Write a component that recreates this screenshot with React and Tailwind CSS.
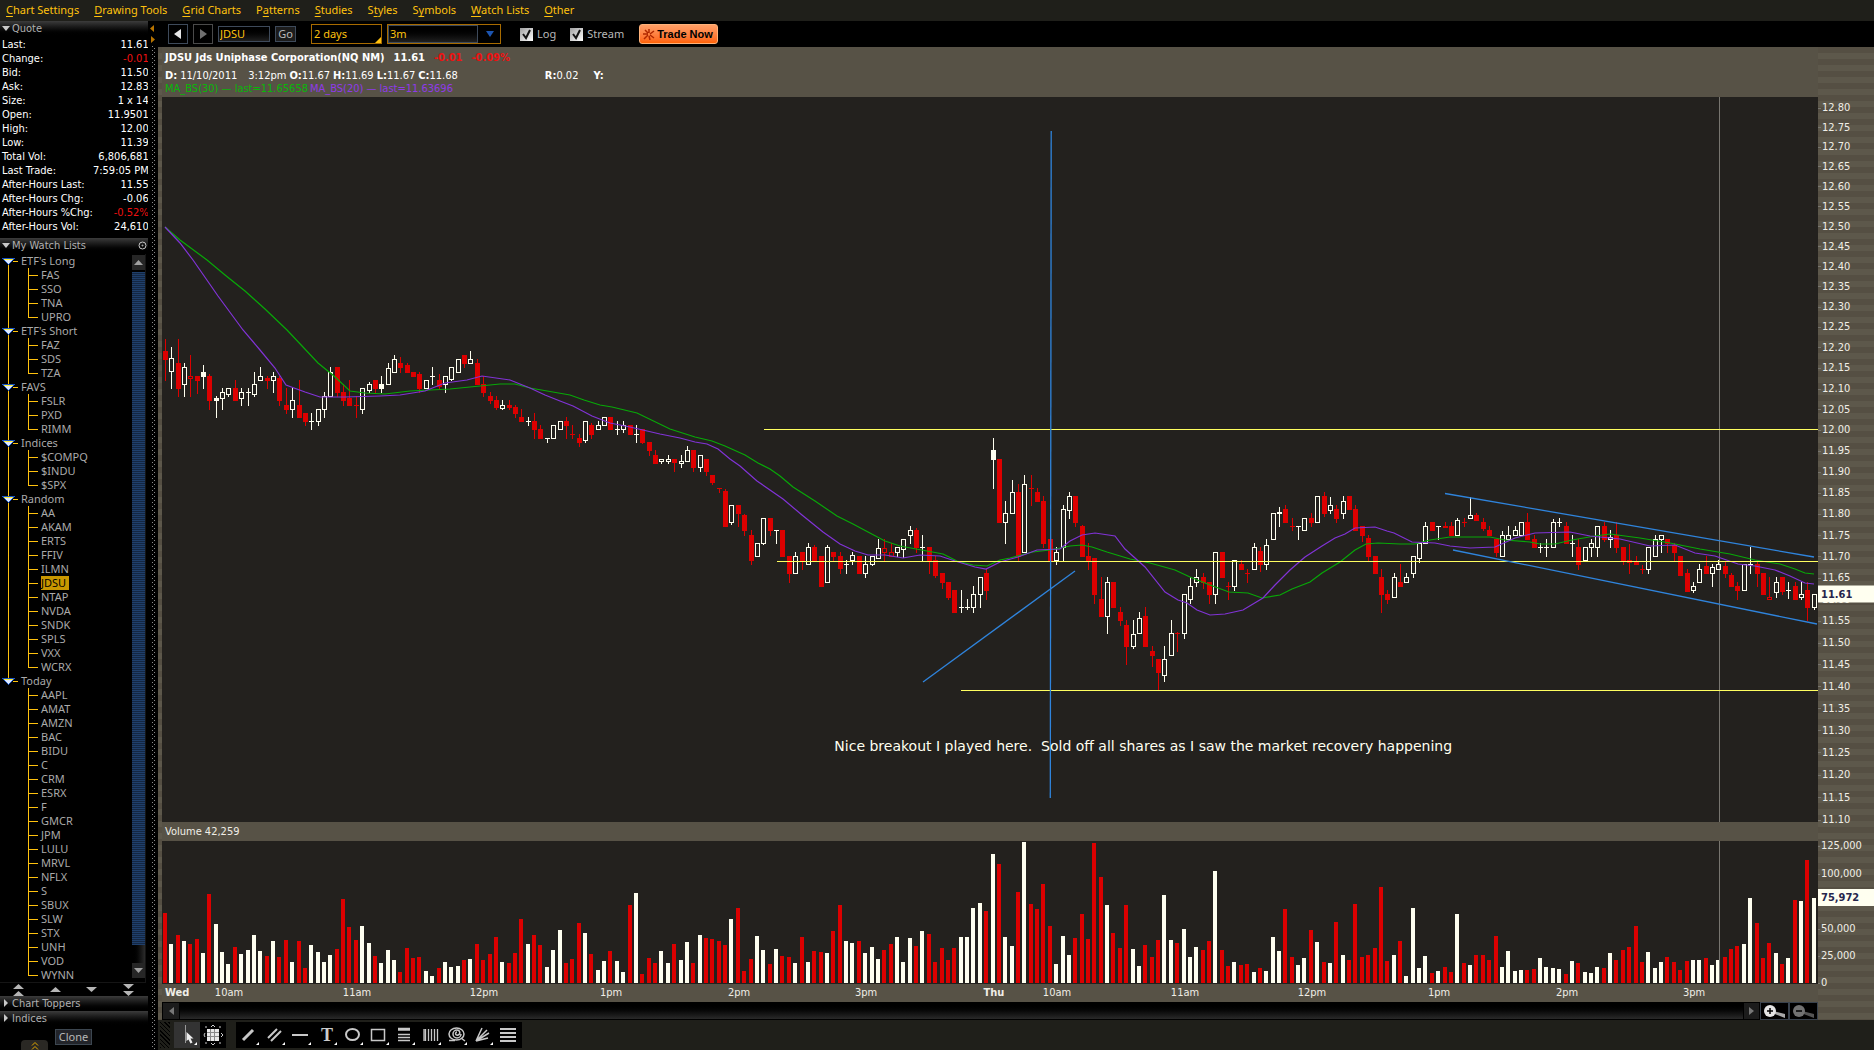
import React, { useState } from "react";

const MENUS = [
  ["", "C", "hart Settings"],
  ["", "D", "rawing Tools"],
  ["", "G", "rid Charts"],
  ["P", "a", "tterns"],
  ["", "S", "tudies"],
  ["S", "t", "yles"],
  ["S", "y", "mbols"],
  ["", "W", "atch Lists"],
  ["", "O", "ther"],
];

const QUOTE = [
  ["Last:", "11.61"],
  ["Change:", "-0.01", true],
  ["Bid:", "11.50"],
  ["Ask:", "12.83"],
  ["Size:", "1 x 14"],
  ["Open:", "11.9501"],
  ["High:", "12.00"],
  ["Low:", "11.39"],
  ["Total Vol:", "6,806,681"],
  ["Last Trade:", "7:59:05 PM"],
  ["After-Hours Last:", "11.55"],
  ["After-Hours Chg:", "-0.06"],
  ["After-Hours %Chg:", "-0.52%", true],
  ["After-Hours Vol:", "24,610"],
];

const WATCH_LISTS = [
  { name: "ETF's Long", symbols: ["FAS", "SSO", "TNA", "UPRO"] },
  { name: "ETF's Short", symbols: ["FAZ", "SDS", "TZA"] },
  { name: "FAVS", symbols: ["FSLR", "PXD", "RIMM"] },
  { name: "Indices", symbols: ["$COMPQ", "$INDU", "$SPX"] },
  {
    name: "Random",
    symbols: ["AA", "AKAM", "ERTS", "FFIV", "ILMN", "JDSU", "NTAP", "NVDA", "SNDK", "SPLS", "VXX", "WCRX"],
  },
  {
    name: "Today",
    symbols: [
      "AAPL", "AMAT", "AMZN", "BAC", "BIDU", "C", "CRM", "ESRX", "F", "GMCR", "JPM",
      "LULU", "MRVL", "NFLX", "S", "SBUX", "SLW", "STX", "UNH", "VOD", "WYNN",
    ],
  },
];

// one candle per 3 minutes: kind high top bottom low
// r = down, w = up, R = down hollow, W = up filled
const CANDLES = `r 339 351 360 381,w 347 358 372 389,r 339 363 389 397,w 363 367 385 397,R 355 376 379 397,r 376 376 381 394,W 365 372 377 389,r 374 376 401 410,W 396 398 401 418,w 388 392 399 410,
w 388 388 395 397,r 380 388 401 401,w 388 392 399 406,w 388 392 393 406,w 372 384 395 397,w 367 376 381 381,r 376 378 381 389,w 372 376 381 393,r 376 378 401 406,r 388 405 410 414,
w 388 400 410 418,r 380 405 418 418,r 413 413 422 426,w 413 421 422 430,w 409 409 422 426,w 392 396 410 418,w 367 372 397 397,r 367 367 393 397,r 384 392 401 406,r 380 398 406 406,
r 396 405 406 418,w 388 388 410 414,w 382 384 391 393,r 380 380 389 393,W 376 384 389 393,w 363 368 385 385,w 355 359 373 373,r 357 363 368 373,r 363 365 373 373,r 372 372 377 377,
r 372 374 389 393,w 380 380 389 389,w 367 376 377 385,r 374 380 387 389,w 376 376 385 393,w 367 367 380 381,w 359 359 373 373,r 355 355 364 368,w 351 359 364 364,r 359 363 385 385,
r 376 384 393 397,r 392 396 401 404,r 396 400 408 410,w 400 405 409 410,r 400 405 408 410,r 405 407 414 418,r 409 417 422 422,w 417 421 422 426,r 413 421 430 439,r 425 429 439 439,
w 438 438 439 443,w 425 425 439 439,w 421 421 430 430,r 417 421 426 439,r 425 434 435 439,r 434 438 443 447,w 421 421 441 443,r 423 425 435 439,w 421 425 430 430,w 417 417 426 426,
r 417 417 430 430,w 421 429 430 435,w 421 425 430 433,r 425 425 435 435,w 425 434 435 443,r 429 429 443 444,r 442 442 451 456,r 450 455 464 464,w 459 459 462 464,w 455 459 462 464,
r 459 459 463 472,w 455 461 464 468,w 446 450 462 462,r 450 450 468 472,w 455 455 468 472,r 459 459 472 476,r 475 475 483 485,r 488 488 489 493,r 489 491 527 527,w 505 505 523 525,
r 505 505 514 527,r 514 515 531 536,r 530 535 561 565,w 543 543 557 557,w 518 518 544 545,r 518 518 531 536,w 530 530 531 544,r 530 530 557 557,r 556 556 574 583,w 552 556 574 574,
r 552 552 561 570,w 543 547 565 565,r 545 547 561 561,r 556 556 587 587,w 545 547 583 583,r 552 552 557 561,r 552 556 569 574,w 560 564 565 574,w 552 555 561 565,r 556 556 574 574,
w 556 564 574 578,w 556 556 565 566,w 539 548 559 559,R 539 548 553 561,R 543 552 557 557,w 547 547 553 557,w 539 539 550 558,w 526 530 536 544,r 528 530 548 553,w 535 547 548 561,
r 547 547 562 574,r 556 560 576 578,r 573 573 583 589,r 582 582 598 600,r 590 590 613 613,w 590 607 608 613,w 599 607 608 610,w 586 594 608 613,w 577 577 595 608,r 569 573 591 600,
W 438 450 460 489,r 459 459 523 523,w 501 513 523 544,w 480 492 514 514,r 484 492 557 561,w 475 484 553 553,r 475 488 489 506,r 488 492 502 502,r 496 501 544 548,r 539 539 561 561,
w 547 552 561 565,w 505 509 548 561,w 492 496 511 519,r 496 496 523 527,r 525 526 557 557,r 543 556 561 570,r 558 558 595 604,r 577 599 617 617,w 577 582 617 634,r 582 582 608 608,
r 607 612 621 626,r 620 625 647 665,w 620 634 647 649,w 612 618 634 634,r 607 616 647 647,r 646 651 656 667,r 659 659 673 690,w 646 659 676 682,w 620 633 656 656,r 632 633 634 652,
w 594 594 634 639,w 577 586 600 604,w 569 577 583 587,r 573 577 583 589,r 582 582 595 604,w 552 552 595 604,r 552 552 578 578,r 582 586 587 600,w 560 560 587 591,r 560 564 570 570,
r 569 573 574 583,w 543 547 570 570,r 547 551 565 572,w 539 545 565 570,w 513 513 540 540,W 507 512 514 527,r 505 509 523 523,r 518 526 527 531,w 526 526 527 540,w 518 518 531 531,
r 513 518 523 527,w 496 496 523 523,r 492 496 514 517,w 497 505 511 514,r 505 509 519 523,w 496 501 514 519,r 496 496 510 510,r 505 509 531 531,r 526 526 536 542,r 535 538 557 561,
r 556 556 574 574,r 569 577 595 613,r 590 594 600 604,w 573 577 598 598,r 564 582 587 587,w 573 577 583 583,w 556 556 574 578,w 543 543 559 563,w 522 526 544 544,r 522 522 531 531,
w 526 526 527 540,r 522 526 528 528,r 522 526 536 536,w 518 520 536 536,r 518 522 523 527,w 497 515 519 519,r 513 515 521 521,r 518 522 529 531,r 526 530 536 536,r 539 539 553 557,
w 531 535 557 557,w 526 535 540 540,w 526 530 536 536,w 522 522 536 536,r 513 522 540 540,r 535 539 548 548,w 543 547 548 553,w 539 547 548 557,w 519 522 548 548,w 518 522 523 527,
r 522 526 544 544,w 535 543 544 557,r 539 547 565 570,w 547 547 561 561,w 539 543 548 557,w 526 526 548 557,r 522 526 540 542,w 530 537 540 548,r 522 535 548 553,r 547 547 561 565,
r 544 560 563 574,r 556 561 565 565,r 565 569 570 574,w 547 547 570 574,w 535 539 557 557,w 535 535 540 553,r 539 539 544 553,r 543 545 553 561,r 556 556 576 576,r 569 573 592 592,
w 582 586 591 593,w 564 569 583 583,r 556 566 574 574,w 564 567 574 587,w 560 564 570 570,r 562 566 574 578,r 573 575 587 587,r 582 586 591 600,w 564 564 591 591,w 547 564 565 574,
r 560 564 574 587,r 573 573 595 595,R 577 597 600 600,w 577 582 593 598,r 577 577 592 595,w 582 590 591 599,r 582 586 600 600,w 582 594 598 600,r 582 590 608 621,w 594 594 608 610`
  .split(",")
  .map((row) => {
    const [kind, ...v] = row.trim().split(" ");
    return [kind, ...v.map(Number)];
  });

// bar heights, negative for a down bar
const VOLUME = [
  -70, 39, -48, 42, -39, -44, 30, -89, 59, 31, 19, -36, 29, 33, 48, 32, -27, 42, -26, -43,
  21, -42, -15, 38, 31, 21, 28, -34, -84, -56, -43, 57, 40, -27, 20, 33, 23, -11, -35, -25,
  -26, 12, 7, -15, 21, 16, 17, -23, 24, -39, -23, -29, -46, 21, -20, -30, -64, 39, -48, -38,
  16, 33, 53, -20, -24, -60, 50, -29, 13, 22, -32, 22, 11, -78, 90, -9, -25, -20, 32, 20,
  -39, 23, 41, -20, 48, -45, -44, -42, -38, 64, -75, -12, -24, 47, 33, -19, 34, -27, -26, 20,
  -46, 21, -32, -31, 30, -52, -78, 42, 40, -42, 30, 36, 24, -33, -39, 46, 21, 45, -37, 52,
  -49, -21, -35, -23, -35, 46, 46, 75, 80, -72, 129, -119, 46, 37, -91, 141, -79, -74, -99, -57,
  19, 47, 28, -45, -69, -44, -140, -106, 78, -50, -35, -78, 34, 17, -38, -26, -43, 88, 43, -40,
  54, 26, 36, -33, -42, 112, -33, -17, 21, -18, -19, 11, -15, 12, 46, 32, -74, -26, 18, 25,
  -53, 41, -21, 20, -61, 28, -23, -79, -26, -28, -35, -96, -22, 28, -42, 7, 75, 15, 27, -10,
  12, -16, -11, 69, -20, 18, -28, -28, -23, -47, 16, 32, 12, 13, -13, -14, 25, 16, 15, 14,
  -9, 22, -20, 11, 10, 16, -15, 30, -23, -33, -36, -57, -21, 31, 15, 21, -26, -21, -13, -22,
  23, 23, -25, 18, 23, -26, -34, -37, 39, 85, -60, -25, -40, 30, -19, 25, -83, 82, -123, 85,
];

const MA30 =
  "165,227 180,240 207,260 225,275 245,291 265,309 287,330 303,347 318,363 334,376 350,391 365,393 385,394 410,391 450,389 480,386 500,384 515,384 530,388 570,395 584,400 600,405 612,407 637,413 670,429 695,437 712,441 725,446 745,455 758,463 770,469 780,476 793,487 815,501 837,516 853,524 868,532 885,541 900,546 927,551 943,554 957,561 973,565 987,566 1000,560 1010,558 1033,552 1050,550 1070,546 1082,545 1092,547 1107,552 1130,559 1150,563 1175,570 1190,577 1210,585 1229,592 1248,593 1262,598 1280,595 1292,589 1310,582 1322,573 1340,562 1355,550 1366,544 1378,543 1400,544 1415,544 1430,540 1450,537 1490,537 1505,540 1530,542 1540,544 1555,544 1572,540 1595,536 1610,534 1640,538 1670,543 1700,549 1730,554 1755,560 1780,564 1795,569 1805,573 1814,574";
const MA20 =
  "165,227 180,243 193,260 218,296 243,330 260,350 275,368 286,385 305,392 320,397 345,397 380,396 400,395 425,391 445,383 467,380 482,376 510,380 530,388 545,395 560,401 573,406 592,416 610,423 630,427 660,434 680,438 695,442 707,444 718,449 730,459 740,466 757,481 783,499 802,515 823,532 840,544 855,551 868,555 885,555 903,558 920,555 940,556 955,561 975,567 986,569 1000,562 1018,557 1037,550 1060,549 1070,541 1082,535 1095,533 1115,536 1125,549 1145,567 1165,592 1178,600 1187,603 1197,610 1210,615 1225,614 1243,610 1263,598 1275,585 1290,570 1305,557 1322,546 1335,538 1345,534 1355,528 1375,527 1387,531 1394,533 1412,542 1435,543 1450,546 1470,548 1495,547 1515,538 1535,533 1570,532 1590,536 1620,539 1650,546 1675,545 1695,553 1715,556 1738,564 1755,566 1775,570 1790,576 1805,583 1814,584";

const TIMES = [
  [10, "10am"], [30, "11am"], [50, "12pm"], [70, "1pm"], [90, "2pm"], [110, "3pm"],
  [130, "Thu"], [140, "10am"], [160, "11am"], [180, "12pm"], [200, "1pm"], [220, "2pm"], [240, "3pm"],
];

const PRICES = Array.from({ length: 35 }, (_, i) => (12.8 - i * 0.05).toFixed(2));
const VOLUMES = [[125000, 5], [100000, 33], [50000, 88], [25000, 115], [0, 142]];

const RED = "#dc0000";
const WHITE = "#fffff0";

const barX = (i) => Math.floor(165.3 + i * 6.367);

// log scale, as a share of the plot's height
const priceTop = (p) => (11 + 4996.6 * Math.log(12.8 / p)) / 725;

function Candle({ i, data }) {
  const [kind, high, top, bottom, low] = data;
  const x = barX(i);
  const color = kind.toLowerCase() === "r" ? RED : WHITE;
  const hollow = kind === "w" || kind === "R";
  return (
    <g fill={color} shapeRendering="crispEdges">
      {top > high && <rect x={x} y={high} width="1" height={top - high} />}
      {low > bottom && <rect x={x} y={bottom} width="1" height={low - bottom} />}
      {hollow && bottom - top > 2 ? (
        <rect x={x - 1.5} y={top + 0.5} width="4" height={bottom - top - 1} fill="none" stroke={color} />
      ) : (
        <rect x={x - 2} y={top} width="5" height={bottom - top} />
      )}
    </g>
  );
}

function PricePlot() {
  return (
    <div className="relative min-h-0 flex-1 bg-[#23211e]">
      <svg className="block h-full w-full" viewBox="162 97 1656 725" preserveAspectRatio="none">
        <line x1="1719.5" x2="1719.5" y1="97" y2="822" stroke="#77756f" />
        {CANDLES.map((c, i) => (
          <Candle key={i} i={i} data={c} />
        ))}
        <polyline points={MA30} fill="none" stroke="#08a808" strokeWidth="1.2" />
        <polyline points={MA20} fill="none" stroke="#8133d6" strokeWidth="1.2" />
        <g fill="#ffff60" shapeRendering="crispEdges">
          <rect x="764" y="429" width="1054" height="1" />
          <rect x="777" y="561" width="1041" height="1" />
          <rect x="961" y="690" width="857" height="1" />
        </g>
        <g stroke="#2f84dc" strokeWidth="1.3">
          <line x1="1051.2" y1="131" x2="1050.3" y2="798" />
          <line x1="923" y1="682" x2="1075" y2="571" />
          <line x1="1445" y1="493.5" x2="1814" y2="557" />
          <line x1="1453" y1="550" x2="1817" y2="624" />
        </g>
      </svg>
      <p className="absolute top-[89.5%] left-[40.6%] -translate-y-1/2 font-[DejaVu_Sans,sans-serif] text-[14px] leading-4 whitespace-pre text-[#fffff0]">
        {"Nice breakout I played here.  Sold off all shares as I saw the market recovery happening"}
      </p>
    </div>
  );
}

function VolumePlot() {
  return (
    <svg className="block h-[143px] w-full bg-[#23211e]" viewBox="162 0 1656 143" preserveAspectRatio="none">
      <g shapeRendering="crispEdges">
        {VOLUME.map((v, i) => (
          <rect key={i} x={barX(i) - 2} y={142 - Math.abs(v)} width="4" height={Math.abs(v)} fill={v < 0 ? RED : WHITE} />
        ))}
        <rect x="1719" y="0" width="1" height="142" fill="#77756f" />
      </g>
    </svg>
  );
}

function TimeAxis() {
  return (
    <div className="relative h-[18px] text-[11px] leading-[18px]">
      <b className="absolute left-[3px]">Wed</b>
      {TIMES.map(([i, label]) => (
        <span
          key={i}
          className={label === "Thu" ? "absolute -translate-x-1/2 font-bold" : "absolute -translate-x-1/2"}
          style={{ left: `${((barX(i) - 161) / 1656) * 100}%` }}
        >
          {label}
        </span>
      ))}
    </div>
  );
}

function Scale() {
  return (
    <div className="flex w-[56px] shrink-0 flex-col bg-[repeating-linear-gradient(#554f43_0_6px,#5d584b_6px_12px)] text-[11px] leading-[14px]">
      <div className="h-[50px]" />
      <div className="relative flex-1">
        {PRICES.map((p) => (
          <span
            key={p}
            className="absolute left-0 flex -translate-y-1/2 items-center gap-px"
            style={{ top: `${priceTop(p) * 100}%` }}
          >
            <i className="h-px w-[3px] bg-[#77756f]" />
            {p}
          </span>
        ))}
        <b
          className="absolute left-0 h-[17px] w-full -translate-y-1/2 bg-[#fffff0] pl-[3px] leading-[17px] text-[#26264c]"
          style={{ top: `${(497 / 725) * 100}%` }}
        >
          11.61
        </b>
      </div>
      <div className="h-[19px]" />
      <div className="relative h-[143px]">
        {VOLUMES.map(([v, top]) => (
          <span key={v} className="absolute left-0 flex -translate-y-1/2 items-center gap-px" style={{ top }}>
            <i className="h-px w-[2px] bg-[#77756f]" />
            {v.toLocaleString("en-US")}
          </span>
        ))}
        <b className="absolute top-[48px] left-0 h-[17px] w-full bg-[#fffff0] pl-[3px] leading-[17px] text-[#26264c]">
          75,972
        </b>
      </div>
      <div className="h-[36px]" />
    </div>
  );
}

function PanelHeader({ open, children, extra }) {
  return (
    <button className="flex h-[15px] w-[148px] shrink-0 items-center bg-linear-to-b from-[#3c3c3c] to-black pl-0.5 text-left leading-[15px] text-[#b0b0b0]">
      <svg width="9" height="9" className="mr-px" fill="#c8c8c8">
        {open ? <path d="M0 2h8l-4 5z" /> : <path d="M2 0v8l4-4z" />}
      </svg>
      {children}
      {extra}
    </button>
  );
}

function QuotePanel() {
  return (
    <table className="mt-0.5 mb-1 w-[148px] text-white">
      <tbody>
        {QUOTE.map(([label, value, down]) => (
          <tr key={label} className="h-[14px] leading-[14px] whitespace-nowrap">
            <th scope="row" className="p-0 pl-0.5 text-left font-normal">
              {label}
            </th>
            <td className={down ? "p-0 pr-0.5 text-right text-[#ee1111]" : "p-0 pr-0.5 text-right"}>{value}</td>
          </tr>
        ))}
      </tbody>
    </table>
  );
}

function WatchGroup({ group, first, last, selected, onSelect }) {
  return (
    <li>
      <button className="flex h-[14px] items-center leading-[14px]">
        <svg width="21" height="14" shapeRendering="crispEdges">
          <path d={first ? "M8.5 7v7" : last ? "M8.5 0v7" : "M8.5 0v14"} stroke="#ffc20e" />
          <path d="M13 7.5h5" stroke="#ffc20e" />
          <path d="M2 4h13L8.500 11z" fill="#1b56c4" />
          <path d="M4 5h9v1l-4.500 4L4 6z" fill="#dfeaff" />
          <path d="M4 5h9v1H4z" fill="#ffee33" />
        </svg>
        {group.name}
      </button>
      <ul>
        {group.symbols.map((s, i) => (
          <li key={s}>
            <button className="flex h-[14px] items-center leading-[14px]" onClick={() => onSelect(s)}>
              <svg width="41" height="14" shapeRendering="crispEdges" stroke="#ffc20e" fill="none">
                {!last && <path d="M8.500 0v14" />}
                <path d={i === group.symbols.length - 1 ? "M28.500 0v8" : "M28.500 0v14"} />
                <path d="M28 7.500h10" />
              </svg>
              <span className={s === selected ? "bg-[#c99700] pr-[3px] text-black" : ""}>{s}</span>
            </button>
          </li>
        ))}
      </ul>
    </li>
  );
}

function Sidebar({ selected, onSelect }) {
  return (
    <aside className="flex w-[148px] shrink-0 flex-col text-[11px]">
      <PanelHeader open>Quote</PanelHeader>
      <QuotePanel />
      <PanelHeader
        open
        extra={
          <svg width="9" height="9" className="mr-px ml-auto" fill="none" stroke="#c8c8c8">
            <circle cx="4.500" cy="4.500" r="3.500" />
            <circle cx="4.500" cy="4.500" r="0.500" />
          </svg>
        }
      >
        My Watch Lists
      </PanelHeader>
      <div className="mt-px mr-0.5 flex min-h-0 flex-1 border-r border-b border-[#151515]">
        <ul className="flex-1 overflow-hidden font-[Noto_Sans,sans-serif] text-[#aaaaaa]">
          {WATCH_LISTS.map((g, i) => (
            <WatchGroup
              key={g.name}
              group={g}
              first={i === 0}
              last={i === WATCH_LISTS.length - 1}
              selected={selected}
              onSelect={onSelect}
            />
          ))}
        </ul>
        <div className="flex w-[13px] flex-col">
          <button aria-label="Scroll up" className="mt-px grid h-[15px] place-items-center bg-[#262626]">
            <svg width="9" height="5" fill="#a0a0a0"><path d="M0 5h9L4.500 0z" /></svg>
          </button>
          <div className="mt-0.5 flex-1 bg-[repeating-linear-gradient(#1f3f6b_0_1px,#142743_1px_2px)]" />
          <div className="h-[18px] bg-linear-to-r from-black to-[#2c2c2c]" />
          <button aria-label="Scroll down" className="mb-1 grid h-[15px] place-items-center bg-[#262626]">
            <svg width="9" height="5" fill="#a0a0a0"><path d="M0 0h9L4.500 5z" /></svg>
          </button>
        </div>
      </div>
      <div className="flex h-[13px] shrink-0 items-center justify-between pr-[14px] pl-[13px]">
        {["M0 5h11L5.500 0zM0 12h11L5.500 7z", "M0 8h11L5.500 3z", "M0 3h11L5.500 8z", "M0 0h11L5.500 5zM0 7h11L5.500 12z"].map((d, i) => (
          <button key={i} aria-label={["To top", "Up", "Down", "To bottom"][i]}>
            <svg width="11" height="12" fill="#b5b5b5"><path d={d} /></svg>
          </button>
        ))}
      </div>
      <PanelHeader>Chart Toppers</PanelHeader>
      <PanelHeader>Indices</PanelHeader>
      <div className="flex h-[24px] shrink-0 pl-[21px]">
        <button aria-label="Expand" className="mt-[14px] grid h-[10px] w-[27px] place-items-center rounded-t bg-[#2a2824]">
          <svg width="8" height="9" fill="none" stroke="#e0a800"><path d="M1 4.500l3-3 3 3M1 8.500l3-3 3 3" /></svg>
        </button>
        <button className="mt-[3px] ml-[7px] h-4 w-[37px] border border-[#3c4650] bg-[#22242a] font-[Noto_Sans,sans-serif] leading-[14px] text-[#b8b8b8]">
          Clone
        </button>
      </div>
    </aside>
  );
}

function Splitter() {
  return (
    <div className="flex w-[10px] shrink-0 flex-col bg-black pt-1">
      <svg width="9" height="20" fill="#b87400">
        <path d="M6 0v7L2 3.500zM3 11v7l4-3.500z" />
      </svg>
      <svg className="w-full flex-1">
        <pattern id="dots" width="10" height="4" patternUnits="userSpaceOnUse">
          <path d="M4 1h1v1H4zM6 3h1v1H6z" fill="#8a8a8a" />
        </pattern>
        <rect width="100%" height="100%" fill="url(#dots)" />
      </svg>
    </div>
  );
}

function Tick({ label }) {
  return (
    <label className="flex items-center gap-1">
      <input
        type="checkbox"
        defaultChecked
        className="peer h-[13px] w-[13px] appearance-none bg-[#c9c9c9] bg-linear-to-br from-[#a0a0a0] to-white"
      />
      <svg className="pointer-events-none -ml-[17px] hidden peer-checked:block" width="13" height="13" fill="none" stroke="#111" strokeWidth="2">
        <path d="M3 6l3 4 4-8" />
      </svg>
      {label}
    </label>
  );
}

function TopBar({ symbol, onSymbol }) {
  return (
    <form className="flex h-[26px] shrink-0 items-center bg-black pl-[10px] font-[Noto_Sans,sans-serif] text-[11px]" onSubmit={(e) => e.preventDefault()}>
      <button type="button" aria-label="Back" className="grid h-5 w-5 place-items-center border border-[#3e4a5a] bg-black">
        <svg width="8" height="10" fill="#e6e6e6"><path d="M7 0v10L0 5z" /></svg>
      </button>
      <button type="button" aria-label="Forward" className="ml-[5px] grid h-5 w-5 place-items-center border border-[#4a4a4a] bg-black">
        <svg width="8" height="10" fill="#707070"><path d="M1 0v10l7-5z" /></svg>
      </button>
      <input
        aria-label="Symbol"
        value={symbol}
        onChange={(e) => onSymbol(e.target.value)}
        className="ml-[5px] h-4 w-[52px] border border-[#3e4a5a] bg-linear-to-b from-black to-[#202020] pl-px text-[#ffc20e]"
      />
      <button className="ml-[5px] h-4 w-[21px] border border-[#3e4a5a] bg-[#1c1c1c] leading-[14px] text-[#b8b8b8]">Go</button>
      <span className="ml-[15px] flex h-5 w-[71px] items-end border border-[#a86b00]">
        <select aria-label="Range" className="h-full flex-1 appearance-none bg-black pl-0.5 text-[#ffc20e]">
          <option>2 days</option>
        </select>
        <svg width="6" height="6" fill="#ffc20e"><path d="M6 0v6H0z" /></svg>
      </span>
      <span className="ml-[5px] flex h-5 w-[114px] items-center border border-[#a86b00] pr-[6px]">
        <select aria-label="Interval" className="mr-[8px] h-full flex-1 appearance-none border border-[#3e4a5a] bg-linear-to-b from-black to-[#202020] pl-px text-[#ffc20e]">
          <option>3m</option>
        </select>
        <svg width="8" height="6" fill="#1c55b0"><path d="M0 0h8L4 6z" /></svg>
      </span>
      <div className="ml-[19px] flex gap-[14px] text-[#b8b8b8]">
        <Tick label="Log" />
        <Tick label="Stream" />
      </div>
      <button type="button" className="ml-[15px] flex h-5 w-[79px] items-center gap-0.5 rounded-[3px] border border-[#ffb27a] bg-linear-to-b from-[#ff9f66] to-[#ff6200] pl-[3px] font-[Liberation_Sans,sans-serif] font-bold whitespace-nowrap text-black">
        <svg width="12" height="12" className="shrink-0" stroke="#b02800" strokeWidth="1.500">
          <path d="M6 5V1M7 6l4-3M7 7l4 3M6 8l1 4M5 7l-4 4M5 6H0M5 5L2 2" />
        </svg>
        Trade Now
      </button>
    </form>
  );
}

function ChartHeader() {
  return (
    <div className="h-[50px] shrink-0 bg-[#575246] pl-[3px] text-[11px] whitespace-pre text-white">
      <div className="flex h-[22px] items-start gap-[9px] font-bold leading-[22px]">
        <span>JDSU Jds Uniphase Corporation(NQ NM)</span>
        <span>11.61</span>
        <span className="text-[#ee1111]">-0.01</span>
        <span className="text-[#ee1111]">-0.09%</span>
      </div>
      <div className="flex h-[14px] gap-[3px] leading-[14px]">
        <b>D:</b>
        <span>11/10/2011</span>
        <span className="ml-2">3:12pm</span>
        <span><b>O:</b>11.67</span>
        <span><b>H:</b>11.69</span>
        <span><b>L:</b>11.67</span>
        <span><b>C:</b>11.68</span>
        <span className="ml-[84px]"><b>R:</b>0.02</span>
        <b className="ml-3">Y:</b>
      </div>
      <div className="flex h-[14px] gap-0.5 leading-[12px]">
        <span className="text-[#08b808]">MA_BS(30) — last=11.65658</span>
        <span className="text-[#8f3ae8]">MA_BS(20) — last=11.63696</span>
      </div>
    </div>
  );
}

function ScrollBar() {
  return (
    <div className="flex h-[18px] shrink-0 bg-black">
      <button aria-label="Scroll left" className="m-px grid w-4 place-items-center bg-[#1c1c1c]">
        <svg width="5" height="8" fill="#777"><path d="M5 0v8L0 4z" /></svg>
      </button>
      <div className="my-px flex-1 bg-linear-to-b from-black to-[#2a2a2a]" />
      <button aria-label="Scroll right" className="m-px grid w-[15px] place-items-center bg-[#1c1c1c]">
        <svg width="5" height="8" fill="#777"><path d="M0 0v8l5-4z" /></svg>
      </button>
      {["+", "-"].map((sign) => (
        <button
          key={sign}
          aria-label={sign === "+" ? "Zoom in" : "Zoom out"}
          className="grid w-[29px] place-items-center border border-[#39424d] bg-black"
        >
          <svg width="24" height="14" opacity={sign === "+" ? 1 : 0.5}>
            <path d="M10 7l12 3v4l-13-5z" fill="#a8a8a8" />
            <circle cx="7" cy="7" r="6" fill="#e4e4e4" />
            <path d={sign === "+" ? "M4 7h6M7 4v6" : "M4 7h6"} stroke="#000" strokeWidth="1.500" />
          </svg>
        </button>
      ))}
    </div>
  );
}

const TOOLS = [
  ["Line", <path key="a" d="M7 18L17 8" strokeWidth="3" />],
  ["Parallel lines", <path key="a" d="M6 16l9-9M9 19l10-10" strokeWidth="2" />],
  ["Horizontal line", <path key="a" d="M4 13h16" strokeWidth="2" />],
  ["Text", null],
  ["Ellipse", <ellipse key="a" cx="12.500" cy="12.500" rx="6.500" ry="5.500" strokeWidth="2" />],
  ["Rectangle", <rect key="a" x="5.500" y="7.500" width="13" height="11" strokeWidth="1.500" />],
  ["Fibonacci retracement", <path key="a" d="M6 8h12M6 12.500h12M6 15.500h12M6 18.500h12M6 6.500h12" strokeWidth="1.500" />],
  ["Fibonacci time", <path key="a" d="M6 7v12M7.500 7v12M10.500 7v12M13.500 7v12M16.500 7v12M19.500 7v12" strokeWidth="1.300" />],
  [
    "Fibonacci arcs",
    <g key="a" strokeWidth="1.500">
      <ellipse cx="12.500" cy="12" rx="7.500" ry="6" />
      <path d="M17 12a4 4 0 1 1-4-4c3 0 4 4 1 5s-3-3-1-3M5 18.500h6M17 16l4 3" />
    </g>,
  ],
  ["Fan", <path key="a" d="M6 19L12 6M6 19L17 8M6 19l13-8M6 19l12-3" strokeWidth="1.500" />],
  ["Levels", <path key="a" d="M4 7h16M4 11h16M4 15h16M4 19h16" strokeWidth="2" />],
];

function DrawingBar() {
  return (
    <div className="flex h-[30px] shrink-0 gap-[10px] bg-[#1f1f1a] py-0.5 pl-0.5">
      <div className="flex">
        <div className="mr-1 w-[10px] bg-[repeating-linear-gradient(45deg,#000_0_1px,#1f1f1a_1px_3px)]" />
        <button aria-label="Pointer" className="w-[26px] bg-[#333333]">
          <svg width="26" height="26">
            <path d="M11.500 3v18" stroke="#999" />
            <path d="M12.500 10v9l2-1.500 2 4 2-1-2-4h3z" fill="#eee" />
            <path d="M23 20v3h-3z" fill="#fff" />
          </svg>
        </button>
        <button aria-label="Crosshair" className="w-[26px] bg-black">
          <svg width="26" height="26" fill="none">
            <path d="M7 7h12v12H7z" fill="#e8e8e8" />
            <path d="M10.500 7v12M14.500 7v12M7 10.500h12M7 14.500h12" stroke="#888" />
            <path d="M11 5l2-2 2 2M11 21l2 2 2-2M5 11l-1 2 1 2M21 11l2 2-2 2M5 5h2M19 5h2M5 21h2M19 21h2" stroke="#ccc" />
          </svg>
        </button>
      </div>
      <div className="flex bg-black">
        {TOOLS.map(([name, icon], i) => (
          <button key={name} aria-label={name} className="grid w-[26px] place-items-center *:[grid-area:1/1]">
            {icon === null && <span className="font-[Liberation_Serif,serif] text-[18px] font-bold leading-[26px] text-[#ccc]">T</span>}
            <svg width="26" height="26" fill="none" stroke="#c8c8c8">
              {icon}
              {i < TOOLS.length - 1 && <path d="M23 20v3h-3z" fill="#fff" stroke="none" />}
            </svg>
          </button>
        ))}
      </div>
    </div>
  );
}

export default function App() {
  const [symbol, setSymbol] = useState("JDSU");

  return (
    <div className="flex h-screen flex-col overflow-hidden bg-black font-[DejaVu_Sans_Condensed,DejaVu_Sans,sans-serif]">
      <nav className="flex h-[21px] shrink-0 items-center gap-[15px] bg-[#1f1f1a] pl-[6px] font-[Noto_Sans,sans-serif] text-[11px] text-[#ffc20e]">
        {MENUS.map(([before, key, after]) => (
          <a key={before + key + after} href="#">
            {before}
            <u className="underline-offset-2">{key}</u>
            {after}
          </a>
        ))}
      </nav>
      <div className="flex min-h-0 flex-1">
        <Sidebar selected={symbol} onSelect={setSymbol} />
        <Splitter />
        <main className="flex min-w-0 flex-1 flex-col text-[#f0eee6]">
          <TopBar symbol={symbol} onSymbol={setSymbol} />
          <div className="flex min-h-0 flex-1">
            <div className="w-1 shrink-0 bg-[repeating-linear-gradient(#554f43_0_6px,#5d584b_6px_12px)]" />
            <div className="flex min-w-0 flex-1 flex-col bg-[#575246]">
              <ChartHeader />
              <PricePlot />
              <div className="h-[19px] shrink-0 pl-[3px] text-[11px] leading-5">Volume 42,259</div>
              <VolumePlot />
              <TimeAxis />
              <ScrollBar />
            </div>
            <Scale />
          </div>
          <DrawingBar />
        </main>
      </div>
    </div>
  );
}
